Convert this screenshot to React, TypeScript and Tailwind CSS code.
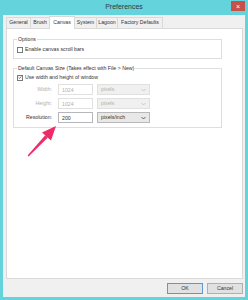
// Preferences dialog (Windows 8 style), Canvas tab selected

const TABS = [
  { name: "General", w: "w-[25px]" },
  { name: "Brush", w: "w-[20px]" },
  { name: "Canvas", w: "w-[26px]" },
  { name: "System", w: "w-[23px]" },
  { name: "Lagoon", w: "w-[22px]" },
  { name: "Factory Defaults", w: "w-[46px]" },
];

function Chevron({ dim }: { dim?: boolean }) {
  return (
    <svg width="5" height="4" viewBox="0 0 5 4" className="shrink-0">
      <path d="M0.5 1 L2.5 3 L4.5 1" fill="none" stroke={dim ? "#c0c0c0" : "#444"} strokeWidth="0.8" />
    </svg>
  );
}

function CheckBox({ checked, label }: { checked?: boolean; label: string }) {
  return (
    <div className="flex items-center h-[7px] gap-[2px]">
      <div className="w-[6px] h-[6px] border-[0.6px] border-[#7a7a7a] bg-white flex items-center justify-center">
        {checked && (
          <svg width="5" height="5" viewBox="0 0 5 5">
            <path d="M0.9 2.5 L2 3.7 L4.2 1" fill="none" stroke="#333" strokeWidth="0.8" />
          </svg>
        )}
      </div>
      <span className="text-[5.2px] leading-[7px] text-[#333]">{label}</span>
    </div>
  );
}

function SizeRow({
  label,
  value,
  unit,
  disabled,
}: {
  label: string;
  value: string;
  unit: string;
  disabled?: boolean;
}) {
  return (
    <div className="flex items-center h-[11px]">
      <span className={`w-[35px] text-right text-[5.2px] ${disabled ? "text-[#b0b0b0]" : "text-[#333]"}`}>
        {label}
      </span>
      <input
        readOnly
        disabled={disabled}
        value={value}
        className={`ml-[6px] w-[35px] h-[11px] px-[3px] text-[5.2px] bg-white border-[0.7px] ${
          disabled ? "border-[#e0e0e0] text-[#b0b0b0]" : "border-[#b5b7bd] text-[#333]"
        }`}
      />
      <div
        className={`ml-[4px] w-[53px] h-[11px] px-[3px] flex items-center justify-between text-[5.2px] border-[0.7px] ${
          disabled
            ? "bg-[#f0f0f0] border-[#e0e0e0] text-[#b0b0b0]"
            : "bg-[#e8e8e8] border-[#b8b8b8] text-[#333]"
        }`}
      >
        <span>{unit}</span>
        <Chevron dim={disabled} />
      </div>
    </div>
  );
}

export default function App() {
  return (
    <div className="relative w-[248px] h-[300px] bg-[#64d3dc] flex flex-col font-['Liberation_Sans',Arial,sans-serif]">
      {/* title bar */}
      <div className="relative h-[15px] flex items-center justify-center">
        <span className="text-[7px] text-[#2e3a3c]">Preferences</span>
        <div className="absolute right-[3px] top-[1px] w-[14px] h-[10px] bg-[#c8504b] flex items-center justify-center text-white text-[7px] leading-none">
          ×
        </div>
      </div>

      {/* dialog body */}
      <div className="flex-1 mx-[3px] mb-[3px] bg-[#f0f0f0] flex flex-col">
        <div className="flex items-end h-[13px] pl-[3px]">
          {TABS.map((t) => {
            const sel = t.name === "Canvas";
            return (
              <div
                key={t.name}
                className={`${t.w} flex items-center justify-center text-[5.2px] text-[#333] border border-b-0 border-[#d9d9d9] -mr-px ${
                  sel ? "relative z-10 h-[13px] bg-white -mb-px pb-[1px]" : "h-[11px] bg-[#f0f0f0]"
                }`}
              >
                {t.name}
              </div>
            );
          })}
        </div>

        <div className="h-[251px] ml-[3px] mr-[2px] bg-white border border-[#d9d9d9] pl-[6px]">
          <fieldset className="mt-[7px] w-[209px] border-[0.7px] border-[#dedede] pl-[3px] pt-[3px] pb-[5px]">
            <legend className="px-[1px] text-[5.2px] leading-[7px] text-[#333]">Options</legend>
            <CheckBox label="Enable canvas scroll bars" />
          </fieldset>

          <fieldset className="mt-[6px] w-[209px] border-[0.7px] border-[#dedede] pl-[3px] pt-[2px] pb-[4px]">
            <legend className="px-[1px] text-[5.2px] leading-[7px] text-[#333]">
              Default Canvas Size (Takes effect with File &gt; New)
            </legend>
            <CheckBox checked label="Use width and height of window" />
            <div className="mt-[3px] flex flex-col gap-[3px]">
              <SizeRow label="Width:" value="1024" unit="pixels" disabled />
              <SizeRow label="Height:" value="1024" unit="pixels" disabled />
              <SizeRow label="Resolution:" value="200" unit="pixels/inch" />
            </div>
          </fieldset>
        </div>

        <div className="flex justify-end gap-[4px] pt-[4px] pr-[2px]">
          <button className="w-[36px] h-[11px] bg-[#e1e1e1] border-[0.7px] border-[#5a9ad0] text-[5.2px] text-[#333]">
            OK
          </button>
          <button className="w-[36px] h-[11px] bg-[#e1e1e1] border-[0.7px] border-[#b0b0b0] text-[5.2px] text-[#333]">
            Cancel
          </button>
        </div>
      </div>

      {/* annotation arrow */}
      <svg className="absolute left-0 top-0 pointer-events-none" width="248" height="300" viewBox="0 0 248 300">
        <polygon points="45.3,135.2 47.9,137.6 28.6,156.4 27.6,155.6" fill="#ee2a68" />
        <polygon points="56,126 42,132.5 51,140.5" fill="#ee2a68" />
      </svg>
    </div>
  );
}
